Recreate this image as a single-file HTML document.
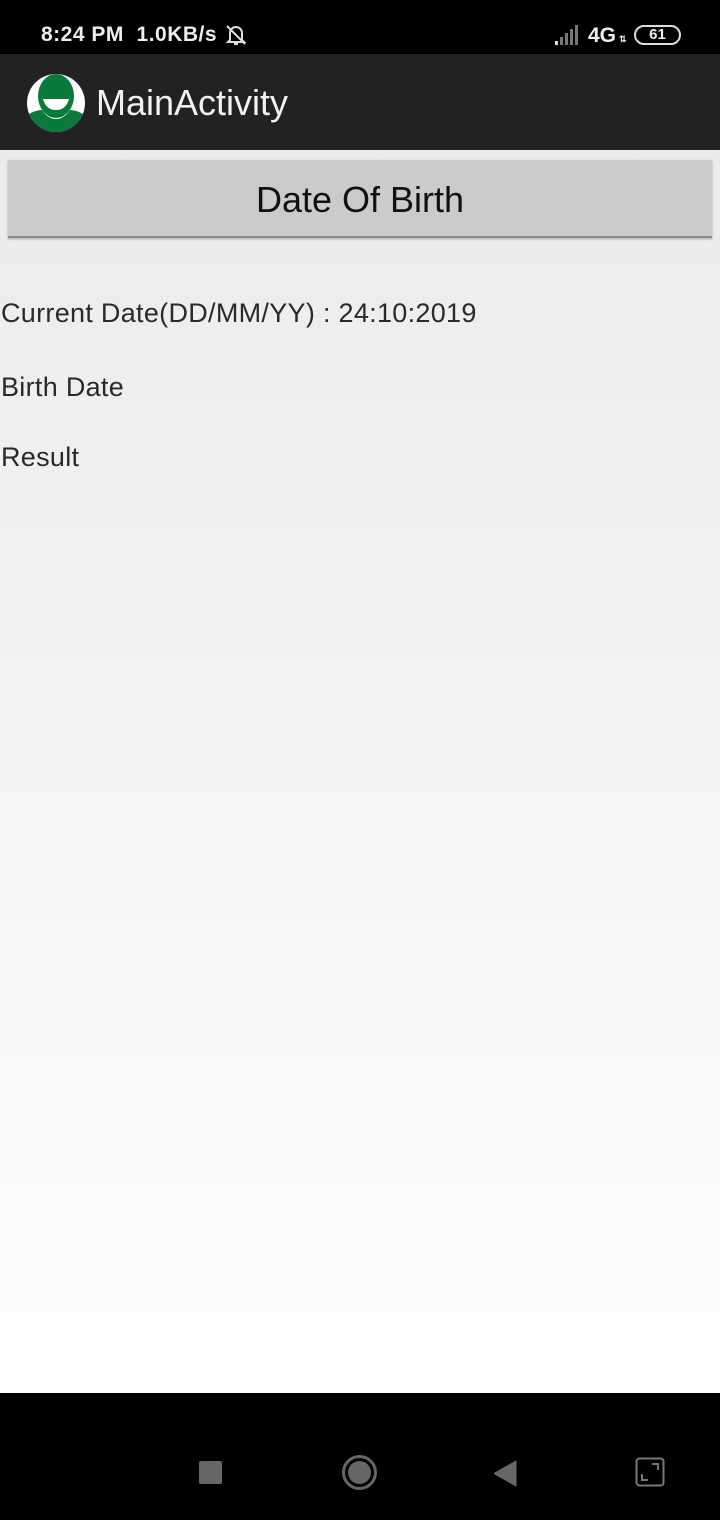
<!DOCTYPE html>
<html><head><meta charset="utf-8"><style>
*{margin:0;padding:0;box-sizing:border-box}
body{width:720px;height:1520px;overflow:hidden;font-family:"Liberation Sans",sans-serif;background:#000;position:relative}
.sb{position:absolute;left:0;top:0;width:720px;height:54px;background:#000;color:#eee;font-weight:bold;font-size:21px}
.ab{position:absolute;left:0;top:54px;width:720px;height:96px;background:#222}
.main{position:absolute;left:0;top:150px;width:720px;height:1243px;background:linear-gradient(#ebebeb,#fefefe)}
.btn{position:absolute;left:8px;top:10px;width:704px;height:78px;background:#cbcbcb;border-bottom:2px solid #8a8a8a;box-shadow:0 1px 2px rgba(0,0,0,.3);font-size:36px;color:#111;text-align:center;line-height:80px}
.t{position:absolute;left:1px;font-size:27px;color:#2a2a2a;letter-spacing:0.3px;white-space:nowrap}
.nav{position:absolute;left:0;top:1393px;width:720px;height:127px;background:#000}
</style></head><body>
<div class="sb">
<span style="position:absolute;left:41px;top:23px;letter-spacing:0.5px">8:24 PM&nbsp; 1.0KB/s</span>
<svg style="position:absolute;left:224px;top:23px" width="24" height="24" viewBox="0 0 24 24" fill="none" stroke="#ddd" stroke-width="2"><path d="M6 17V10a6 6 0 0 1 12 0v7l2 2H4z M10 21h4 M3 3l18 18"/></svg>
<svg style="position:absolute;left:555px;top:24px" width="30" height="22" viewBox="0 0 30 22"><rect x="0" y="17" width="3" height="4" fill="#ddd"/><rect x="5" y="13" width="3" height="8" fill="#777"/><rect x="10" y="9" width="3" height="12" fill="#777"/><rect x="15" y="5" width="3" height="16" fill="#777"/><rect x="20" y="1" width="3" height="20" fill="#777"/></svg>
<span style="position:absolute;left:588px;top:24px">4G</span>
<span style="position:absolute;left:619px;top:34px;font-size:9px">⇅</span>
<div style="position:absolute;left:634px;top:25px;width:47px;height:20px;border:2px solid #ddd;border-radius:10px;font-size:15px;line-height:16px;text-align:center;color:#eee">61</div>
</div>
<div class="ab">
<svg style="position:absolute;left:26px;top:20px" width="60" height="58" viewBox="0 0 60 58"><ellipse cx="30" cy="29" rx="29" ry="29" fill="#fff"/><clipPath id="c"><ellipse cx="30" cy="29" rx="29" ry="29"/></clipPath><g clip-path="url(#c)"><ellipse cx="30" cy="22" rx="18" ry="22" fill="#0a7a3a"/><path d="M17 25h26q-3 11-13 11t-13-11z" fill="#fff"/><path d="M0 58v-16q8-6 16-6q6 9 14 9t14-9q8 0 16 6v16z" fill="#0a7a3a"/></g></svg>
<span style="position:absolute;left:96px;top:28px;font-size:36px;color:#f2f2f2">MainActivity</span>
</div>
<div class="main">
<div class="btn">Date Of Birth</div>
<div class="t" style="top:148px">Current Date(DD/MM/YY) : 24:10:2019</div>
<div class="t" style="top:222px">Birth Date</div>
<div class="t" style="top:292px">Result</div>
</div>
<div class="nav">
<div style="position:absolute;left:199px;top:68px;width:23px;height:23px;background:#666;border-radius:2px"></div>
<div style="position:absolute;left:342px;top:62px;width:35px;height:35px;border:3px solid #666;border-radius:50%"><div style="margin:3px;width:23px;height:23px;background:#666;border-radius:50%"></div></div>
<svg style="position:absolute;left:494px;top:67px" width="24" height="27" viewBox="0 0 24 27"><path d="M0 13.5L22 1v25z" fill="#666" stroke="#666" stroke-linejoin="round"/></svg>
<svg style="position:absolute;left:635px;top:64px" width="30" height="30" viewBox="0 0 30 30" fill="none" stroke="#777" stroke-width="2"><rect x="1.5" y="1.5" width="27" height="27" rx="3"/><path d="M17 7h6v6 M13 23H7v-6"/></svg>
</div>
</body></html>
